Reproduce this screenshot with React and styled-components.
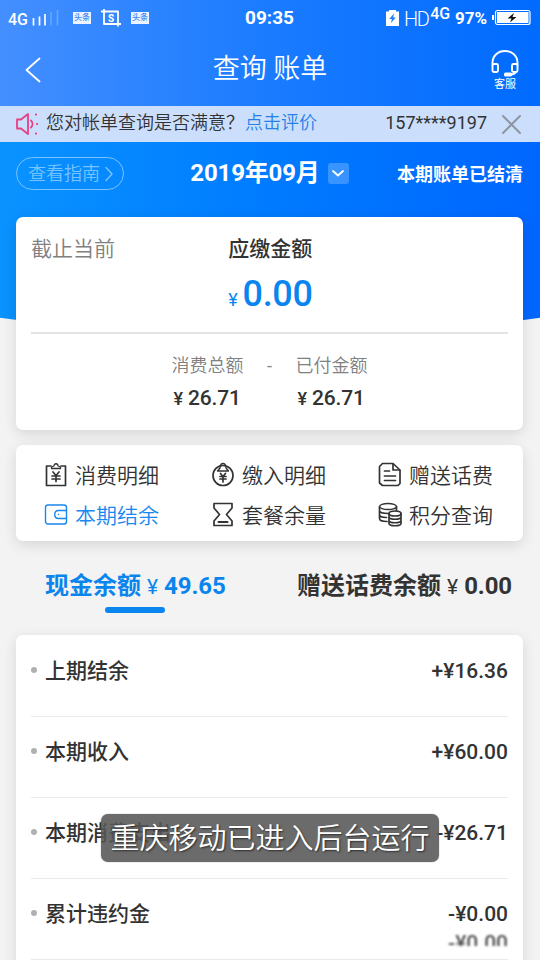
import React from "react";
import styled, { createGlobalStyle } from "styled-components";

const GlobalStyle = createGlobalStyle`
  * {
    box-sizing: border-box;
  }
  body {
    margin: 0;
    overflow: hidden;
    background: #f3f3f3;
    font-family: Roboto, "Noto Sans CJK SC", sans-serif;
    color: #333;
  }
`;

const Container = styled.div`
  width: 540px;
  height: 960px;
  overflow: hidden;
`;

const Header = styled.header`
  height: 106px;
  background: linear-gradient(90deg, #448fff 0%, #1a7bff 50%, #006bff 100%);
  color: #fff;
`;

const StatusBar = styled.div`
  height: 36px;
  padding: 0 9px 0 8px;
  display: grid;
  grid-template-columns: 1fr auto 1fr;
  align-items: center;
`;
const StatusLeft = styled.div`
  display: flex;
  align-items: center;
`;
const StatusRight = styled.div`
  display: flex;
  align-items: center;
  justify-content: flex-end;
`;
const Network = styled.span`
  font-size: 16px;
  font-weight: 500;
  line-height: 20px;
  padding-top: 3px;
  width: 22px;
`;
const NewsBadge = styled.span`
  width: 18px;
  height: 12px;
  background: #eaf3ff;
  color: #3a87f5;
  font-size: 8px;
  font-weight: 500;
  line-height: 12px;
  text-align: center;
  white-space: nowrap;
`;
const Clock = styled.span`
  font-size: 19px;
  font-weight: 700;
  line-height: 36px;
`;
const Hd = styled.span`
  font-size: 20px;
  font-weight: 300;
  letter-spacing: -1.5px;
  margin: 1px 2px 0 5px;
`;
const Lte = styled.span`
  font-size: 16px;
  font-weight: 500;
  line-height: 16px;
  letter-spacing: -0.2px;
  padding-bottom: 8px;
`;
const Percent = styled.span`
  font-size: 17px;
  font-weight: 700;
  margin: 0 5px 0 5px;
`;

const NavBar = styled.div`
  height: 70px;
  padding: 0 19px 0 24px;
  display: grid;
  grid-template-columns: 32px 1fr 32px;
  align-items: center;
`;
const Title = styled.h1`
  margin: 0;
  padding: 0 5px 5px 0;
  font-size: 27px;
  font-weight: 350;
  line-height: 36px;
  text-align: center;
`;
const Service = styled.div`
  display: flex;
  flex-direction: column;
  align-items: center;
  padding-bottom: 1px;
  font-size: 11px;
  line-height: 15px;
`;

const Notice = styled.div`
  height: 36px;
  padding: 0 18px 0 15px;
  display: flex;
  align-items: center;
  background: #cbdffc;
  font-size: 18px;
  line-height: 34px;
  white-space: nowrap;
`;
const NoticeText = styled.span`
  margin: -2px 1px 0 8px;
  font-weight: 350;
`;
const NoticeLink = styled.a`
  margin-top: -2px;
  color: #2780e8;
  font-weight: 350;
`;
const Phone = styled.span`
  margin: -2px 14px 0 auto;
`;

const Hero = styled.section`
  height: 195px;
  background: linear-gradient(90deg, #0a93ff 0%, #007bff 50%, #0066ff 100%);
  clip-path: circle(1900px at 50% -1705px);
`;
const HeroRow = styled.div`
  height: 75px;
  padding: 0 17px 12px 16px;
  display: grid;
  grid-template-columns: 1fr auto 1fr;
  align-items: center;
  color: #fff;
`;
const Guide = styled.button`
  width: 108px;
  height: 33px;
  padding: 0 10px 0 11px;
  display: flex;
  align-items: center;
  justify-content: space-between;
  border: 1px solid #79c4ff;
  border-radius: 17px;
  background: transparent;
  color: #79c4ff;
  font-family: inherit;
  font-size: 18px;
  font-weight: 350;
  line-height: 30px;
  white-space: nowrap;
`;
const Month = styled.div`
  display: flex;
  align-items: center;
  gap: 8px;
  margin-top: -2px;
  font-size: 24px;
  font-weight: 700;
  letter-spacing: -0.15px;
  line-height: 32px;
`;
const Dropdown = styled.span`
  width: 21px;
  height: 21px;
  margin-top: 2px;
  display: grid;
  place-items: center;
  border-radius: 3px;
  background: rgba(255, 255, 255, 0.22);
`;
const Settled = styled.span`
  justify-self: end;
  margin-top: -2px;
  font-size: 18px;
  font-weight: 700;
`;

const Card = styled.section`
  width: 507px;
  margin-left: 16px;
  border-radius: 7px;
  background: #fff;
  box-shadow: 0 4px 14px rgba(0, 0, 0, 0.12);
`;

const Summary = styled(Card)`
  position: relative;
  height: 213px;
  margin-top: -120px;
  padding: 0 15px;
`;
const Due = styled.div`
  height: 117px;
  padding-top: 17px;
  border-bottom: 2px solid #e3e3e3;
  display: grid;
  grid-template-columns: 1fr auto 1fr;
`;
const Until = styled.span`
  color: #808080;
  font-size: 21px;
  font-weight: 350;
  line-height: 31px;
`;
const DueLabel = styled.div`
  padding-left: 2px;
  font-size: 21px;
  font-weight: 500;
  line-height: 31px;
`;
const DueAmount = styled.div`
  display: flex;
  align-items: baseline;
  justify-content: center;
  gap: 5px;
  color: #0a85f0;
  font-size: 36px;
  font-weight: 500;
  letter-spacing: -0.3px;
  line-height: 42px;
  padding: 8px 0 0 2px;
`;
const Yen = styled.span`
  font-size: ${({ size }) => size}px;
  font-weight: ${({ weight }) => weight || 400};
`;
const Split = styled.div`
  padding-top: 18px;
  display: flex;
  justify-content: center;
`;
const Dash = styled.span`
  width: 52px;
  color: #888;
  font-size: 18px;
  line-height: 28px;
  text-align: center;
`;
const SplitLabel = styled.div`
  color: #808080;
  font-size: 18px;
  font-weight: 350;
  line-height: 28px;
`;
const SplitAmount = styled.div`
  display: flex;
  align-items: baseline;
  gap: 5px;
  padding: 2px 0 0 2px;
  font-size: 21px;
  font-weight: 500;
  letter-spacing: -0.15px;
  line-height: 32px;
`;

const Menu = styled(Card)`
  height: 96px;
  margin-top: 15px;
  padding: 9px 0 0 28px;
  display: grid;
  grid-template-columns: repeat(3, 167px);
  grid-auto-rows: 40px;
`;
const MenuItem = styled.div`
  display: flex;
  align-items: center;
  gap: 6px;
  color: ${({ $active }) => ($active ? "#1887ee" : "#333")};
  font-size: 21px;
  font-weight: 350;
  white-space: nowrap;
`;

const Tabs = styled.div`
  height: 94px;
  padding: 27px 28px 0 45px;
  display: flex;
  justify-content: space-between;
`;
const Tab = styled.div`
  height: 45px;
  display: flex;
  flex-direction: column;
  align-items: center;
  color: ${({ $active }) => ($active ? "#0a85ee" : "#333")};
  font-size: 24px;
  font-weight: 700;
  line-height: 36px;
  white-space: nowrap;
`;
const TabLabel = styled.div`
  display: flex;
  align-items: baseline;
  gap: 6px;
`;
const TabAmount = styled.span`
  letter-spacing: -0.1px;
`;
const TabLine = styled.span`
  width: 60px;
  height: 6px;
  margin-top: 2px;
  border-radius: 3px;
  background: #0a85ee;
`;

const Bill = styled(Card)`
  padding: 0 15px;
  height: 340px;
`;
const Row = styled.div`
  height: 81px;
  padding-top: 20px;
  display: flex;
  align-items: flex-start;
  font-size: 21px;
  font-weight: 500;
  line-height: 32px;
  box-shadow: 0 1px 0 #e9e9e9;
`;
const Dot = styled.i`
  width: 6px;
  height: 6px;
  margin: 12px 8px 0 0;
  border-radius: 50%;
  background: #b0b0b0;
`;
const Amounts = styled.div`
  margin-left: auto;
  text-align: right;
`;
const Ghost = styled.div`
  height: 17px;
  margin-top: -1px;
  overflow: hidden;
  line-height: 28px;
  filter: blur(0.8px);
  opacity: 0.85;
`;

const Toast = styled.div`
  position: absolute;
  left: 101px;
  top: 814px;
  width: 338px;
  height: 48px;
  border-radius: 7px;
  background: rgba(87, 87, 87, 0.88);
  box-shadow: 0 0 1px #555;
  color: #fff;
  font-size: 29px;
  font-weight: 350;
  line-height: 50px;
  text-align: center;
  white-space: nowrap;
  text-shadow: 1px 1px 2px rgba(0, 0, 0, 0.6);
`;

const Icon = styled.svg`
  flex: none;
  display: block;
  overflow: visible;
  fill: none;
  stroke: ${({ color }) => color || "currentColor"};
  stroke-width: ${({ strokeWidth }) => strokeWidth || 1.7};
  stroke-linecap: round;
  stroke-linejoin: round;
`;

const Signal = () => (
  <Icon width="28" height="16" viewBox="0 0 28 16">
    <path d="M3.500 8v7.500M9.500 6.500v9M15 4v11.500" strokeLinecap="butt" />
    <path d="M21 2v13.500M27.500 0v15.500" stroke="#62a6ff" strokeLinecap="butt" />
  </Icon>
);

const Crop = () => (
  <Icon width="20" height="18" viewBox="0 0 20 18" strokeWidth="1.8">
    <path d="M0 2.500h17v15M3 0v15h17" strokeLinecap="butt" />
    <text
      x="10"
      y="12.500"
      fill="#fff"
      stroke="none"
      fontSize="10"
      fontWeight="700"
      textAnchor="middle"
    >
      S
    </text>
  </Icon>
);

const StatusIcons = styled.div`
  display: flex;
  align-items: center;
  gap: 10px;
  margin-left: 15px;
  margin-top: -1px;
`;

const SimBattery = () => (
  <Icon width="13" height="16" viewBox="0 0 13 16">
    <path d="M0 1.500h3V0h7v1.500h3V16H0z" fill="#fff" stroke="none" />
    <path d="M8 3.500L3.200 9h2.600L5 13l4.800-5.500H7.200z" fill="#247dff" stroke="none" />
  </Icon>
);

const Battery = () => (
  <Icon width="39" height="16" viewBox="0 0 39 16">
    <rect x="0" y="5" width="2" height="5" fill="#fff" stroke="none" />
    <rect x="3.500" y="0.500" width="34.500" height="14" rx="2" strokeWidth="1.200" />
    <rect x="5" y="2" width="31.500" height="11" fill="#fff" stroke="none" />
    <path d="M22 3L15.500 8.500h4l-1.500 4 6.500-5.500h-4z" fill="#111" stroke="none" />
  </Icon>
);

const BackIcon = () => (
  <Icon width="18" height="26" viewBox="0 0 18 26" strokeWidth="1.8">
    <path d="M15.500 0.500L2.500 12l13 11.500" />
  </Icon>
);

const Headset = () => (
  <Icon width="28" height="27" viewBox="0 0 28 27" strokeWidth="1.9">
    <path d="M1.500 15v-2C1.500 5.500 7 1 14 1s12.500 4.500 12.500 12v2" />
    <rect x="1.500" y="14" width="5.500" height="8" rx="1.500" />
    <rect x="21" y="14" width="5.500" height="8" rx="1.500" />
    <path d="M25 22c-1 1.500-2.500 2.500-5 2.500" />
    <rect x="13" y="22.500" width="8" height="4" rx="1.500" fill="#fff" stroke="none" />
  </Icon>
);

const Speaker = () => (
  <Icon width="23" height="24" viewBox="0 0 23 24" color="#e6407f" strokeWidth="1.8">
    <path d="M2 7.500h4L13 2v20l-7-5.500H2z" />
    <path d="M16 8.500c2 2 2 5 0 7" />
    <path d="M21 2.500v.1M22 12h.1M21 21.500v.1" strokeWidth="2.200" />
  </Icon>
);

const CloseIcon = () => (
  <Icon width="21" height="21" viewBox="0 0 21 21" color="#8e959f" strokeWidth="2">
    <path d="M2 2l17 17M19 2L2 19" />
  </Icon>
);

const Chevron = () => (
  <Icon width="8" height="16" viewBox="0 0 8 16" strokeWidth="1.4">
    <path d="M1 1.500L7 8l-6 6.500" />
  </Icon>
);

const ChevronDown = () => (
  <Icon width="12" height="7" viewBox="0 0 12 7" strokeWidth="1.8">
    <path d="M1 1l5 4.500L11 1" />
  </Icon>
);

const icons = {
  clipboard: (
    <>
      <path d="M7 4H2.500v19.500h19V4H17" />
      <path d="M7.500 6.500V5l2.500-1c0-3 4-3 4 0l2.500 1v1.500z" strokeWidth="1.300" />
      <path d="M9 10l3 3.500 3-3.500M12 13.500v6M8 14h8M8 17h8" />
    </>
  ),
  bag: (
    <>
      <circle cx="12" cy="13.500" r="10" />
      <path d="M6.500 9h11L15 6c.5-6-6.500-6-6 0z" strokeWidth="1.400" />
      <path d="M9.500 11.500l2.500 3 2.500-3M12 14.500V20M9 14.500h6M9 17h6" />
    </>
  ),
  doc: (
    <>
      <path d="M4.500 1.500H15l7 6.500v13.500l-2 2H4.500l-3-2.500V4.500z" />
      <path d="M15 2v6h6.500M6.500 9h5M6.500 14h11M6.500 18.500h11" />
    </>
  ),
  wallet: (
    <>
      <rect x="1.500" y="3" width="21" height="19" rx="2.500" strokeWidth="1.4" />
      <path d="M22.500 8.500h-8c-5 0-5 8 0 8h8M14.500 12.500v.1" strokeWidth="1.4" />
    </>
  ),
  hourglass: (
    <>
      <path d="M3 1.500h18v4.500l-5.500 6.500L21 19v4.500H3V19l5.500-6.500L3 6z" />
      <path d="M7.500 20h9" strokeWidth="2" />
    </>
  ),
  coins: (
    <>
      <ellipse cx="10" cy="4.500" rx="8.500" ry="3" strokeWidth="1.300" />
      <path d="M1.500 4.500v12c0 2 3 3 7.500 3M18.500 4.500v4M1.500 8.500c0 2 4 3 9 3M1.500 12.500c0 2 3 3 7 3" />
      <ellipse cx="17" cy="11.500" rx="6" ry="2.500" />
      <path d="M11 11.500v10c0 3 12 3 12 0v-10M11 15c0 3 12 3 12 0M11 18.500c0 3 12 3 12 0" />
    </>
  ),
};

const menu = [
  { icon: "clipboard", label: "消费明细" },
  { icon: "bag", label: "缴入明细" },
  { icon: "doc", label: "赠送话费" },
  { icon: "wallet", label: "本期结余", active: true },
  { icon: "hourglass", label: "套餐余量" },
  { icon: "coins", label: "积分查询" },
];

const bills = [
  { label: "上期结余", amount: "+¥16.36" },
  { label: "本期收入", amount: "+¥60.00" },
  { label: "本期消费支出", amount: "-¥26.71" },
  { label: "累计违约金", amount: "-¥0.00", ghost: "-¥0.00" },
];

const App = () => {
  return (
    <Container>
      <GlobalStyle />
      <Header>
        <StatusBar>
          <StatusLeft>
            <Network>4G</Network>
            <Signal />
            <StatusIcons>
              <NewsBadge>头条</NewsBadge>
              <Crop />
              <NewsBadge>头条</NewsBadge>
            </StatusIcons>
          </StatusLeft>
          <Clock>09:35</Clock>
          <StatusRight>
            <SimBattery />
            <Hd>HD</Hd>
            <Lte>4G</Lte>
            <Percent>97%</Percent>
            <Battery />
          </StatusRight>
        </StatusBar>
        <NavBar>
          <BackIcon />
          <Title>查询 账单</Title>
          <Service>
            <Headset />
            客服
          </Service>
        </NavBar>
      </Header>
      <Notice>
        <Speaker />
        <NoticeText>您对帐单查询是否满意？</NoticeText>
        <NoticeLink>点击评价</NoticeLink>
        <Phone>157****9197</Phone>
        <CloseIcon />
      </Notice>
      <Hero>
        <HeroRow>
          <Guide>
            查看指南
            <Chevron />
          </Guide>
          <Month>
            2019年09月
            <Dropdown>
              <ChevronDown />
            </Dropdown>
          </Month>
          <Settled>本期账单已结清</Settled>
        </HeroRow>
      </Hero>
      <Summary>
        <Due>
          <Until>截止当前</Until>
          <div>
            <DueLabel>应缴金额</DueLabel>
            <DueAmount>
              <Yen size={18}>¥</Yen>0.00
            </DueAmount>
          </div>
        </Due>
        <Split>
          <div>
            <SplitLabel>消费总额</SplitLabel>
            <SplitAmount>
              <Yen size={18} weight={500}>¥</Yen>26.71
            </SplitAmount>
          </div>
          <Dash>-</Dash>
          <div>
            <SplitLabel>已付金额</SplitLabel>
            <SplitAmount>
              <Yen size={18} weight={500}>¥</Yen>26.71
            </SplitAmount>
          </div>
        </Split>
      </Summary>
      <Menu>
        {menu.map((item) => (
          <MenuItem key={item.label} $active={item.active}>
            <Icon width="25" height="25" viewBox="0 0 25 25">
              {icons[item.icon]}
            </Icon>
            {item.label}
          </MenuItem>
        ))}
      </Menu>
      <Tabs>
        <Tab $active>
          <TabLabel>
            现金余额<Yen size={21}>¥</Yen>
            <TabAmount>49.65</TabAmount>
          </TabLabel>
          <TabLine />
        </Tab>
        <Tab>
          <TabLabel>
            赠送话费余额<Yen size={21}>¥</Yen>
            <TabAmount>0.00</TabAmount>
          </TabLabel>
        </Tab>
      </Tabs>
      <Bill>
        {bills.map((bill) => (
          <Row key={bill.label}>
            <Dot />
            {bill.label}
            <Amounts>
              {bill.amount}
              {bill.ghost && <Ghost>{bill.ghost}</Ghost>}
            </Amounts>
          </Row>
        ))}
      </Bill>
      <Toast>重庆移动已进入后台运行</Toast>
    </Container>
  );
};

export default App;
